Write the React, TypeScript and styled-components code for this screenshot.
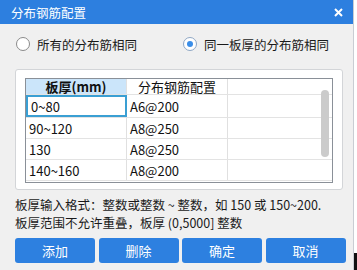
import { createGlobalStyle, styled } from 'styled-components';

const GlobalStyle = createGlobalStyle`
  body {
    margin: 0;
    background: #ffffff;
    font-family: "Noto Sans CJK SC", "Noto Sans", sans-serif;
  }
`;

const SPage = styled.div`
  display: flex;
  width: 357px;
  height: 270px;
  overflow: hidden;
`;

const SDialog = styled.div`
  display: flex;
  flex-direction: column;
  width: 353px;
  height: 270px;
  background: #f0f0f0;
  border-right: 1px solid #c9cdd3;
`;

const SEdge = styled.div`
  flex: 1;
  display: flex;
  flex-direction: column;
  justify-content: flex-end;
`;

const SEdgeBlock = styled.div`
  height: 17px;
  background: #111111;
`;

const STitleBar = styled.div`
  display: flex;
  align-items: center;
  justify-content: space-between;
  height: 24px;
  padding: 0 10px 0 11px;
  background: #2d7fdf;
  color: #ffffff;
  font-size: 12.5px;
`;

const SRadioRow = styled.div`
  display: flex;
  align-items: center;
  height: 40px;
  padding-left: 16px;
  font-size: 12.5px;
  color: #1a1a1a;
`;

const SRadioOption = styled.label<{ $width?: number }>`
  display: flex;
  align-items: center;
  gap: 7px;
  width: ${({ $width }) => ($width ? `${$width}px` : 'auto')};
`;

const SRadioCircle = styled.span<{ $checked?: boolean }>`
  display: flex;
  align-items: center;
  justify-content: center;
  box-sizing: border-box;
  width: 14px;
  height: 14px;
  border-radius: 50%;
  border: 1px solid ${({ $checked }) => ($checked ? '#8fa7c4' : '#8a8a8a')};
  background: #ffffff;

  &::after {
    content: '';
    display: ${({ $checked }) => ($checked ? 'block' : 'none')};
    width: 6px;
    height: 6px;
    border-radius: 50%;
    background: #3b8ee8;
  }
`;

const SGroupBox = styled.div`
  box-sizing: border-box;
  margin: 5px 0 0 15px;
  width: 328px;
  height: 121px;
  padding: 8px 9px 0;
  background: #ffffff;
  border: 1px solid #d3d5d8;
  border-radius: 3px;
`;

const STable = styled.div`
  position: relative;
  box-sizing: border-box;
  width: 308px;
  height: 105px;
  border: 1px solid #8a9098;
  font-size: 13px;
  color: #111111;
`;

const SRow = styled.div<{ $height: number }>`
  display: flex;
  height: ${({ $height }) => $height}px;
  border-bottom: 1px solid #e3e3e3;
  box-sizing: border-box;
`;

const SCell = styled.div<{ $head?: boolean; $active?: boolean; $fill?: boolean }>`
  box-sizing: border-box;
  display: flex;
  align-items: center;
  justify-content: ${({ $head }) => ($head ? 'center' : 'flex-start')};
  width: 101px;
  padding-left: ${({ $head }) => ($head ? 0 : 3)}px;
  border-right: 1px solid #e0e0e0;
  background: ${({ $fill }) => ($fill ? '#cbe5fa' : 'transparent')};
  font-weight: ${({ $fill }) => ($fill ? 700 : 400)};
  border: ${({ $active }) => ($active ? '2px solid #3a9fd3' : undefined)};
  white-space: nowrap;
`;

const SScrollThumb = styled.div`
  position: absolute;
  top: 11px;
  right: 3px;
  width: 8px;
  height: 67px;
  border-radius: 4px;
  background: #cbcbcb;
`;

const SNotes = styled.div`
  margin: 6px 0 0 15px;
  font-size: 12.5px;
  color: #1a1a1a;
  white-space: nowrap;
`;

const SNoteLine = styled.div`
  height: 18px;
  line-height: 18px;
`;

const SButtonRow = styled.div`
  display: grid;
  grid-template-columns: repeat(4, 80px);
  gap: 3.5px;
  margin: 6px 0 0 15px;
`;

const SButton = styled.button`
  height: 25px;
  border: none;
  border-radius: 3px;
  background: #2d80e0;
  color: #ffffff;
  font-family: inherit;
  font-size: 13px;
  padding: 0;
`;

const rows = [
  { thick: '0~80', bar: 'A6@200' },
  { thick: '90~120', bar: 'A8@250' },
  { thick: '130', bar: 'A8@250' },
  { thick: '140~160', bar: 'A8@200' },
];

const App = () => (
  <>
    <GlobalStyle />
    <SPage>
      <SDialog>
        <STitleBar>
          <span>分布钢筋配置</span>
          <svg width="9" height="9" viewBox="0 0 9 9">
            <path d="M1 1 L8 8 M8 1 L1 8" stroke="#ffffff" strokeWidth="2" />
          </svg>
        </STitleBar>
        <SRadioRow>
          <SRadioOption $width={167}>
            <SRadioCircle />
            所有的分布筋相同
          </SRadioOption>
          <SRadioOption>
            <SRadioCircle $checked />
            同一板厚的分布筋相同
          </SRadioOption>
        </SRadioRow>
        <SGroupBox>
          <STable>
            <SRow $height={16}>
              <SCell $head $fill>板厚(mm)</SCell>
              <SCell $head>分布钢筋配置</SCell>
            </SRow>
            {rows.map((row, i) => (
              <SRow key={row.thick} $height={i === 0 ? 23 : 21}>
                <SCell $active={i === 0}>{row.thick}</SCell>
                <SCell>{row.bar}</SCell>
              </SRow>
            ))}
            <SScrollThumb />
          </STable>
        </SGroupBox>
        <SNotes>
          <SNoteLine>板厚输入格式：整数或整数 ~ 整数，如 150 或 150~200.</SNoteLine>
          <SNoteLine>板厚范围不允许重叠，板厚 (0,5000] 整数</SNoteLine>
        </SNotes>
        <SButtonRow>
          <SButton>添加</SButton>
          <SButton>删除</SButton>
          <SButton>确定</SButton>
          <SButton>取消</SButton>
        </SButtonRow>
      </SDialog>
      <SEdge>
        <SEdgeBlock />
      </SEdge>
    </SPage>
  </>
);

export default App;
